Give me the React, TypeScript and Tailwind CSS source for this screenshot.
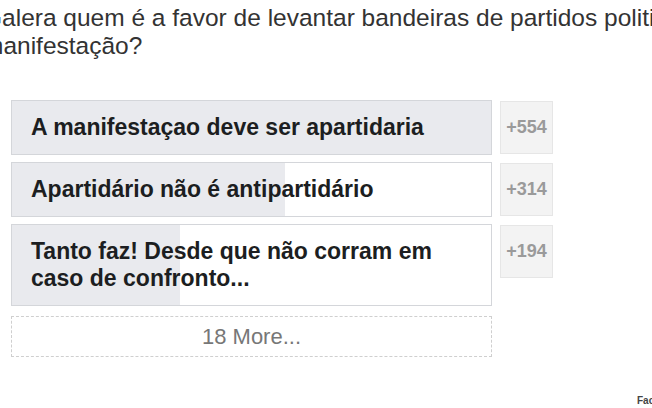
import React from "react";

type Opt = { text: string[]; pct: number; count: string };

const options: Opt[] = [
  { text: ["A manifestaçao deve ser apartidaria"], pct: 100, count: "+554" },
  { text: ["Apartidário não é antipartidário"], pct: 57, count: "+314" },
  { text: ["Tanto faz! Desde que não corram em", "caso de confronto..."], pct: 35, count: "+194" },
];

export default function App() {
  return (
    <div
      className="relative w-[652px] h-[408px] overflow-hidden bg-white"
      style={{ fontFamily: '"Liberation Sans", Arial, sans-serif' }}
    >
      <div className="ml-[-17px] pt-[4px] text-[24.5px] leading-[28px] text-[#333333] whitespace-nowrap">
        <div>Galera quem é a favor de levantar bandeiras de partidos politicos na</div>
        <div>manifestação?</div>
      </div>
      <div className="ml-[11px] mt-[40px] flex flex-col gap-[7px] w-[542px]">
        {options.map((o, i) => (
          <div key={i} className="flex items-start gap-[8px]">
            <div className="relative w-[481px] border border-[#d4d6da] bg-white">
              <div
                className="absolute left-0 top-0 bottom-0 bg-[#e9eaee]"
                style={{ width: `${o.pct}%` }}
              />
              <div className="relative px-[19px] py-[13px] text-[23px] leading-[27px] font-bold text-[#1c1e21] whitespace-nowrap">
                {o.text.map((t, j) => (
                  <div key={j}>{t}</div>
                ))}
              </div>
            </div>
            <div className="w-[53px] h-[53px] mt-[1px] border border-[#e6e6e6] bg-[#f3f3f3] flex items-center justify-center text-[18px] font-bold text-[#9a9a9a]">
              {o.count}
            </div>
          </div>
        ))}
        <div className="mt-[3px] w-[481px] h-[41px] border border-dashed border-[#cfcfcf] flex items-center justify-center text-[22px] text-[#777777]">
          18 More...
        </div>
      </div>
      <div className="absolute left-[637px] top-[393px] text-[10px] font-bold text-[#444] whitespace-nowrap">
        Facebook
      </div>
    </div>
  );
}
